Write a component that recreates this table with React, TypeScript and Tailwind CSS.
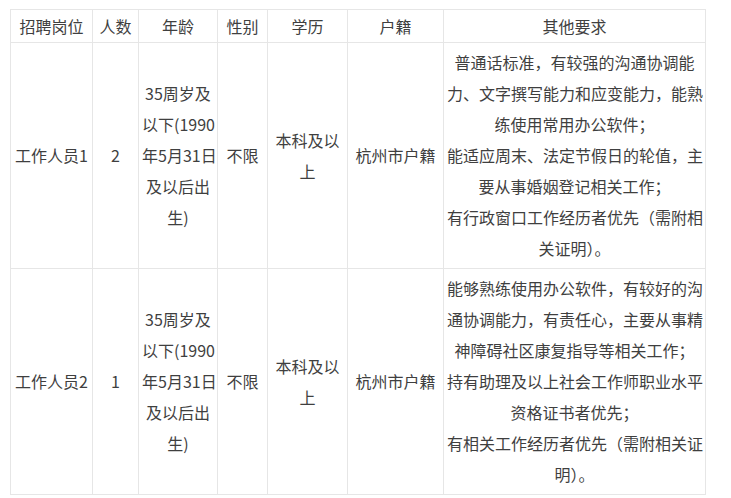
const ageLines = ["35周岁及", "以下(1990", "年5月31日", "及以后出", "生)"];
const eduLines = ["本科及以", "上"];

const rows = [
  {
    post: "工作人员1",
    count: "2",
    other: [
      "普通话标准，有较强的沟通协调能",
      "力、文字撰写能力和应变能力，能熟",
      "练使用常用办公软件；",
      "能适应周末、法定节假日的轮值，主",
      "要从事婚姻登记相关工作；",
      "有行政窗口工作经历者优先（需附相",
      "关证明）。",
    ],
  },
  {
    post: "工作人员2",
    count: "1",
    other: [
      "能够熟练使用办公软件，有较好的沟",
      "通协调能力，有责任心，主要从事精",
      "神障碍社区康复指导等相关工作；",
      "持有助理及以上社会工作师职业水平",
      "资格证书者优先；",
      "有相关工作经历者优先（需附相关证",
      "明）。",
    ],
  },
];

const headers = [
  { label: "招聘岗位", w: "w-[82px]" },
  { label: "人数", w: "w-[46px]" },
  { label: "年龄", w: "w-[79px]" },
  { label: "性别", w: "w-[50px]" },
  { label: "学历", w: "w-[80px]" },
  { label: "户籍", w: "w-[96px]" },
  { label: "其他要求", w: "w-[262px]" },
];

function Lines({ lines }: { lines: string[] }) {
  return (
    <>
      {lines.map((l, i) => (
        <div key={i} className="whitespace-nowrap">
          {l}
        </div>
      ))}
    </>
  );
}

export default function App() {
  const cell = "border border-[#e6e6e6] px-[3px] text-center align-middle";
  return (
    <div
      className="w-[731px] h-[498px] bg-white pt-[9px] pl-[10px] text-[16px] text-[#3f3f3f] leading-[31px]"
      style={{ fontFamily: '"Noto Sans CJK SC", "Noto Sans", sans-serif' }}
    >
      <table className="table-fixed border-collapse w-[695px]">
        <thead>
          <tr className="h-[33px]">
            {headers.map((h) => (
              <th key={h.label} className={`${cell} ${h.w} font-normal py-0`}>
                {h.label}
              </th>
            ))}
          </tr>
        </thead>
        <tbody>
          {rows.map((r) => (
            <tr key={r.post} className="h-[225px]">
              <td className={`${cell} whitespace-nowrap`}>{r.post}</td>
              <td className={cell}>{r.count}</td>
              <td className={cell}>
                <Lines lines={ageLines} />
              </td>
              <td className={cell}>不限</td>
              <td className={cell}>
                <Lines lines={eduLines} />
              </td>
              <td className={`${cell} whitespace-nowrap`}>杭州市户籍</td>
              <td className={`${cell} py-1`}>
                <Lines lines={r.other} />
              </td>
            </tr>
          ))}
        </tbody>
      </table>
    </div>
  );
}
